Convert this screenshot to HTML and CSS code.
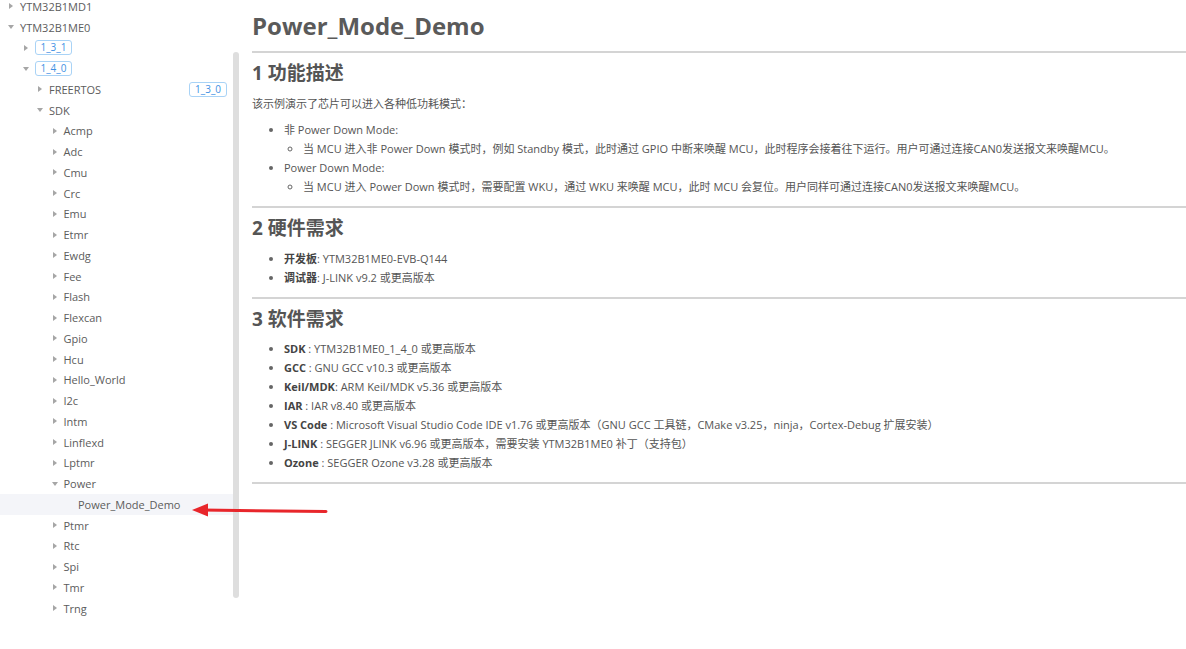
FILE: index.html
```html
<!DOCTYPE html>
<html lang="zh-CN">
<head>
    <meta charset="UTF-8">
    <title>Power_Mode_Demo</title>
    <link rel="stylesheet" href="styles.css">
</head>
<body>

<div class="layout">
    <!-- Sidebar tree -->
    <aside class="sidebar">
        <div class="tree">
            <div class="row l0"><span class="caret right"></span><span class="label">YTM32B1MD1</span></div>
            <div class="row l0"><span class="caret down"></span><span class="label">YTM32B1ME0</span></div>
            <div class="row l1"><span class="caret right"></span><span class="tag">1_3_1</span></div>
            <div class="row l1"><span class="caret down"></span><span class="tag">1_4_0</span></div>
            <div class="row l2"><span class="caret right"></span><span class="label">FREERTOS</span><span class="tag push">1_3_0</span></div>
            <div class="row l2"><span class="caret down"></span><span class="label">SDK</span></div>
            <div class="row l3"><span class="caret right"></span><span class="label">Acmp</span></div>
            <div class="row l3"><span class="caret right"></span><span class="label">Adc</span></div>
            <div class="row l3"><span class="caret right"></span><span class="label">Cmu</span></div>
            <div class="row l3"><span class="caret right"></span><span class="label">Crc</span></div>
            <div class="row l3"><span class="caret right"></span><span class="label">Emu</span></div>
            <div class="row l3"><span class="caret right"></span><span class="label">Etmr</span></div>
            <div class="row l3"><span class="caret right"></span><span class="label">Ewdg</span></div>
            <div class="row l3"><span class="caret right"></span><span class="label">Fee</span></div>
            <div class="row l3"><span class="caret right"></span><span class="label">Flash</span></div>
            <div class="row l3"><span class="caret right"></span><span class="label">Flexcan</span></div>
            <div class="row l3"><span class="caret right"></span><span class="label">Gpio</span></div>
            <div class="row l3"><span class="caret right"></span><span class="label">Hcu</span></div>
            <div class="row l3"><span class="caret right"></span><span class="label">Hello_World</span></div>
            <div class="row l3"><span class="caret right"></span><span class="label">I2c</span></div>
            <div class="row l3"><span class="caret right"></span><span class="label">Intm</span></div>
            <div class="row l3"><span class="caret right"></span><span class="label">Linflexd</span></div>
            <div class="row l3"><span class="caret right"></span><span class="label">Lptmr</span></div>
            <div class="row l3"><span class="caret down"></span><span class="label">Power</span></div>
            <div class="row l4 selected"><span class="caret none"></span><span class="label">Power_Mode_Demo</span></div>
            <div class="row l3"><span class="caret right"></span><span class="label">Ptmr</span></div>
            <div class="row l3"><span class="caret right"></span><span class="label">Rtc</span></div>
            <div class="row l3"><span class="caret right"></span><span class="label">Spi</span></div>
            <div class="row l3"><span class="caret right"></span><span class="label">Tmr</span></div>
            <div class="row l3"><span class="caret right"></span><span class="label">Trng</span></div>
        </div>
        <div class="track"><div class="thumb"></div></div>
    </aside>

    <!-- Document -->
    <main class="doc">
        <h1>Power_Mode_Demo</h1>

        <section>
            <h2>1 功能描述</h2>
            <p>该示例演示了芯片可以进入各种低功耗模式：</p>
            <ul>
                <li>非 Power Down Mode:
                    <ul>
                        <li>当 MCU 进入非 Power Down 模式时，例如 Standby 模式，此时通过 GPIO 中断来唤醒 MCU，此时程序会接着往下运行。用户可通过连接CAN0发送报文来唤醒MCU。</li>
                    </ul>
                </li>
                <li>Power Down Mode:
                    <ul>
                        <li>当 MCU 进入 Power Down 模式时，需要配置 WKU，通过 WKU 来唤醒 MCU，此时 MCU 会复位。用户同样可通过连接CAN0发送报文来唤醒MCU。</li>
                    </ul>
                </li>
            </ul>
        </section>

        <section>
            <h2>2 硬件需求</h2>
            <ul>
                <li><b>开发板</b>: YTM32B1ME0-EVB-Q144</li>
                <li><b>调试器</b>: J-LINK v9.2 或更高版本</li>
            </ul>
        </section>

        <section>
            <h2>3 软件需求</h2>
            <ul>
                <li><b>SDK</b> : YTM32B1ME0_1_4_0 或更高版本</li>
                <li><b>GCC</b> : GNU GCC v10.3 或更高版本</li>
                <li><b>Keil/MDK</b>: ARM Keil/MDK v5.36 或更高版本</li>
                <li><b>IAR</b> : IAR v8.40 或更高版本</li>
                <li><b>VS Code</b> : Microsoft Visual Studio Code IDE v1.76 或更高版本（GNU GCC 工具链，CMake v3.25，ninja，Cortex-Debug 扩展安装）</li>
                <li><b>J-LINK</b> : SEGGER JLINK v6.96 或更高版本，需要安装 YTM32B1ME0 补丁（支持包）</li>
                <li><b>Ozone</b> : SEGGER Ozone v3.28 或更高版本</li>
            </ul>
        </section>
    </main>
</div>

<!-- annotation arrow pointing at the selected node -->
<svg class="pointer" width="140" height="20" viewBox="0 0 140 20">
    <line x1="136" y1="11.5" x2="12" y2="10" stroke="#e8262b" stroke-width="3" stroke-linecap="round"/>
    <polygon points="2,10 18,3.5 18,16.5" fill="#e8262b"/>
</svg>

</body>
</html>
```

FILE: styles.css
```css
body {
    margin: 0;
    background: #fff;
    color: #555;
    font-family: "Open Sans", "Noto Sans CJK SC", sans-serif;
    font-size: 11px;
    overflow: hidden;
}
.layout {
    display: flex;
    height: 649px;
}

/* sidebar */
.sidebar {
    width: 240px;
    flex: none;
    display: flex;
    overflow: hidden;
}
.tree {
    width: 233px;
    margin-top: -4px;
}
.row {
    display: flex;
    align-items: center;
    height: 20.75px;
    color: #5c5c5c;
    white-space: nowrap;
}
.row.selected {
    background: #f4f5f9;
}
.l0 { padding-left: 7px; }
.l1 { padding-left: 21.5px; }
.l2 { padding-left: 36px; }
.l3 { padding-left: 50.5px; }
.l4 { padding-left: 65px; }
.caret {
    width: 13px;
    flex: none;
    display: flex;
    align-items: center;
}
.caret.right::before {
    content: "";
    margin-left: 2px;
    border-left: 4px solid #a6a6a6;
    border-top: 3px solid transparent;
    border-bottom: 3px solid transparent;
}
.caret.down::before {
    content: "";
    margin-left: 1px;
    border-top: 4px solid #a6a6a6;
    border-left: 3px solid transparent;
    border-right: 3px solid transparent;
}
.tag {
    display: inline-block;
    height: 13px;
    line-height: 13px;
    padding: 0 5px;
    border: 1px solid #a9d3f6;
    border-radius: 3px;
    color: #3f91e3;
    font-size: 10px;
}
.tag.push {
    margin-left: auto;
    margin-right: 6px;
}
.track {
    width: 7px;
    flex: none;
}
.thumb {
    margin-top: 52px;
    width: 6px;
    height: 546px;
    border-radius: 3px;
    background: #dedede;
}

/* document */
.doc {
    flex: 1;
    padding: 10px 0 0 12px;
}
h1 {
    margin: 0;
    font-size: 24px;
    line-height: 32px;
    color: #5a5a5a;
    font-weight: 700;
    padding-bottom: 9px;
    border-bottom: 2px solid #d4d4d4;
}
section {
    padding-bottom: 10px;
    border-bottom: 2px solid #d4d4d4;
}
h2 {
    margin: 7px 0 0;
    font-size: 19px;
    line-height: 26px;
    color: #555;
    font-weight: 700;
}
p {
    margin: 7.5px 0 0;
    line-height: 19px;
}
ul {
    margin: 7.5px 0 0;
    padding-left: 32px;
    line-height: 19px;
}
ul ul {
    margin: 0;
    padding-left: 19px;
    list-style: circle;
}
li::marker {
    color: #666;
}
b {
    color: #444;
    font-weight: 700;
}

.pointer {
    position: absolute;
    left: 190px;
    top: 500px;
}
```
